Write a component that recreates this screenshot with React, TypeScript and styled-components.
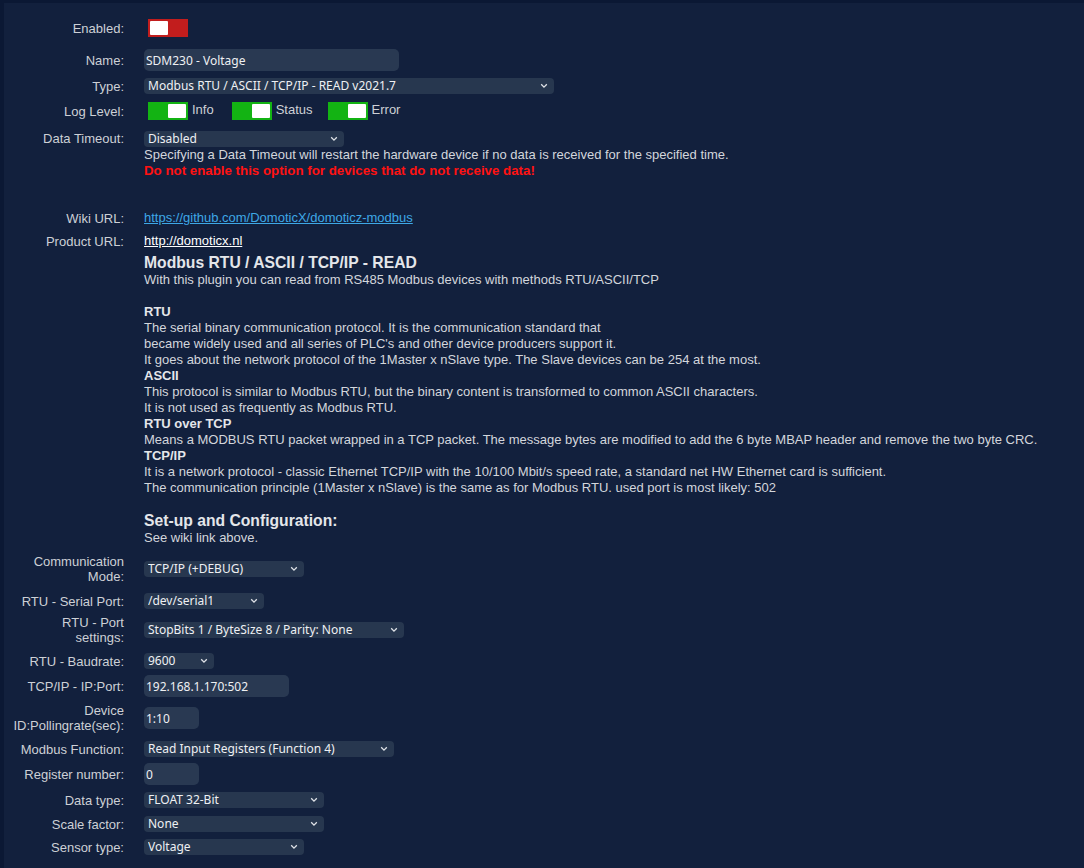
import styled, { createGlobalStyle } from "styled-components";

const GlobalStyle = createGlobalStyle`
  html, body {
    margin: 0;
    padding: 0;
    background: #0b1834;
  }
  body {
    font-family: "Liberation Sans", Arial, sans-serif;
  }
`

const Panel = styled.div`
  margin: 3px 0 0 4px;
  background: #12203d;
  min-height: 865px;
  padding: 16px 0 0 8px;
  box-sizing: border-box;
  color: #d3d6dc;
`

const Row = styled.div<{ $mt?: number; $top?: boolean }>`
  display: grid;
  grid-template-columns: 112px 1fr;
  column-gap: 20px;
  align-items: ${(p) => (p.$top ? "start" : "center")};
  margin-top: ${(p) => p.$mt ?? 0}px;
`

const Label = styled.div`
  text-align: right;
  font-size: 13px;
  line-height: 15px;
  color: #cdd0d6;
`

const Value = styled.div`
  font-size: 13px;
  line-height: 16px;
  min-width: 0;
`

const Toggle = styled.span<{ $on: boolean }>`
  display: inline-block;
  position: relative;
  width: 40px;
  height: 18px;
  margin-left: 4px;
  background: ${(p) => (p.$on ? "#13b313" : "#c21d1d")};
  flex: none;

  &::after {
    content: "";
    position: absolute;
    top: 2px;
    ${(p) => (p.$on ? "right: 2px;" : "left: 2px;")}
    width: 18px;
    height: 14px;
    background: #fff;
    border-radius: 1px;
  }
`

const LogGroup = styled.div`
  display: flex;
  align-items: center;
`

const LogItem = styled.span<{ $gap: number }>`
  display: inline-flex;
  align-items: center;
  margin-right: ${(p) => p.$gap}px;
  font-size: 13px;
  color: #cdd0d6;
`

const LogText = styled.span`
  margin-left: 4px;
  position: relative;
  top: -1px;
`

const SelectWrap = styled.div<{ $w: number }>`
  position: relative;
  width: ${(p) => p.$w}px;
  height: 16px;
`

const NativeSelect = styled.select`
  appearance: none;
  width: 100%;
  height: 16px;
  margin: 0;
  border: none;
  border-radius: 4px;
  background: #27374f;
  color: #eef0f3;
  font-family: "Noto Sans", Roboto, sans-serif;
  font-size: 12px;
  line-height: 16px;
  padding: 0 16px 0 4px;
  outline: none;
`

const Chevron = styled.svg`
  position: absolute;
  right: 6px;
  top: 5px;
  pointer-events: none;
`

const TextInput = styled.input<{ $w: number }>`
  width: ${(p) => p.$w}px;
  height: 22px;
  box-sizing: border-box;
  margin: 0;
  border: none;
  border-radius: 5px;
  background: #293952;
  color: #eef0f3;
  font-family: "Noto Sans", Roboto, sans-serif;
  font-size: 12px;
  padding: 0 2px;
  outline: none;
`

const Hint = styled.div`
  color: #d3d6dc;
`

const Warning = styled.div`
  color: #ff1212;
  font-weight: bold;
  font-size: 13.3px;
`

const Link = styled.a<{ $blue?: boolean }>`
  color: ${(p) => (p.$blue ? "#3ea8e6" : "#ffffff")};
  text-decoration: underline;
  font-size: 13px;
`

const Description = styled.div`
  font-size: 13px;
  line-height: 16px;
  color: #d3d6dc;
`

const Heading = styled.div`
  font-weight: bold;
  font-size: 15.7px;
  line-height: 18px;
  color: #e4e6ea;
`

const Sub = styled.div`
  font-weight: bold;
  color: #e4e6ea;
`

const Blank = styled.div`
  height: 16px;
`

function Select({ w, value }: { w: number; value: string }) {
  return (
    <SelectWrap $w={w}>
      <NativeSelect defaultValue={value}>
        <option>{value}</option>
      </NativeSelect>
      <Chevron width="8" height="6" viewBox="0 0 8 6">
        <path d="M1.2 1.3 L4 4.1 L6.8 1.3" fill="none" stroke="#dfe2e7" strokeWidth="1.3" />
      </Chevron>
    </SelectWrap>
  )
}

export default function App() {
  return (
    <>
      <GlobalStyle />
      <Panel>
        <Row>
          <Label>Enabled:</Label>
          <Value>
            <LogGroup>
              <Toggle $on={false} />
            </LogGroup>
          </Value>
        </Row>
        <Row $mt={12}>
          <Label>Name:</Label>
          <Value>
            <TextInput $w={255} defaultValue="SDM230 - Voltage" />
          </Value>
        </Row>
        <Row $mt={7}>
          <Label>Type:</Label>
          <Value>
            <Select w={410} value="Modbus RTU / ASCII / TCP/IP - READ v2021.7" />
          </Value>
        </Row>
        <Row $mt={8}>
          <Label>Log Level:</Label>
          <Value>
            <LogGroup>
              <LogItem $gap={14}>
                <Toggle $on />
                <LogText>Info</LogText>
              </LogItem>
              <LogItem $gap={11}>
                <Toggle $on />
                <LogText>Status</LogText>
              </LogItem>
              <LogItem $gap={0}>
                <Toggle $on />
                <LogText>Error</LogText>
              </LogItem>
            </LogGroup>
          </Value>
        </Row>
        <Row $mt={11} $top>
          <Label>Data Timeout:</Label>
          <Value>
            <Select w={200} value="Disabled" />
            <Hint>Specifying a Data Timeout will restart the hardware device if no data is received for the specified time.</Hint>
            <Warning>Do not enable this option for devices that do not receive data!</Warning>
          </Value>
        </Row>
        <Row $mt={31}>
          <Label>Wiki URL:</Label>
          <Value>
            <Link $blue href="#">https://github.com/DomoticX/domoticz-modbus</Link>
          </Value>
        </Row>
        <Row $mt={7}>
          <Label>Product URL:</Label>
          <Value>
            <Link href="#">http://domoticx.nl</Link>
          </Value>
        </Row>
        <Row $mt={5} $top>
          <Label />
          <Description>
            <Heading>Modbus RTU / ASCII / TCP/IP - READ</Heading>
            <div>With this plugin you can read from RS485 Modbus devices with methods RTU/ASCII/TCP</div>
            <Blank />
            <Sub>RTU</Sub>
            <div>The serial binary communication protocol. It is the communication standard that</div>
            <div>became widely used and all series of PLC's and other device producers support it.</div>
            <div>It goes about the network protocol of the 1Master x nSlave type. The Slave devices can be 254 at the most.</div>
            <Sub>ASCII</Sub>
            <div>This protocol is similar to Modbus RTU, but the binary content is transformed to common ASCII characters.</div>
            <div>It is not used as frequently as Modbus RTU.</div>
            <Sub>RTU over TCP</Sub>
            <div>Means a MODBUS RTU packet wrapped in a TCP packet. The message bytes are modified to add the 6 byte MBAP header and remove the two byte CRC.</div>
            <Sub>TCP/IP</Sub>
            <div>It is a network protocol - classic Ethernet TCP/IP with the 10/100 Mbit/s speed rate, a standard net HW Ethernet card is sufficient.</div>
            <div>The communication principle (1Master x nSlave) is the same as for Modbus RTU. used port is most likely: 502</div>
            <Blank />
            <Heading>Set-up and Configuration:</Heading>
            <div>See wiki link above.</div>
          </Description>
        </Row>
        <Row $mt={8}>
          <Label>Communication Mode:</Label>
          <Value>
            <Select w={160} value="TCP/IP (+DEBUG)" />
          </Value>
        </Row>
        <Row $mt={9}>
          <Label>RTU - Serial Port:</Label>
          <Value>
            <Select w={120} value="/dev/serial1" />
          </Value>
        </Row>
        <Row $mt={6}>
          <Label>RTU - Port settings:</Label>
          <Value>
            <Select w={260} value="StopBits 1 / ByteSize 8 / Parity: None" />
          </Value>
        </Row>
        <Row $mt={8}>
          <Label>RTU - Baudrate:</Label>
          <Value>
            <Select w={70} value="9600" />
          </Value>
        </Row>
        <Row $mt={6}>
          <Label>TCP/IP - IP:Port:</Label>
          <Value>
            <TextInput $w={145} defaultValue="192.168.1.170:502" />
          </Value>
        </Row>
        <Row $mt={6}>
          <Label>Device ID:Pollingrate(sec):</Label>
          <Value>
            <TextInput $w={55} defaultValue="1:10" />
          </Value>
        </Row>
        <Row $mt={8}>
          <Label>Modbus Function:</Label>
          <Value>
            <Select w={250} value="Read Input Registers (Function 4)" />
          </Value>
        </Row>
        <Row $mt={6}>
          <Label>Register number:</Label>
          <Value>
            <TextInput $w={55} defaultValue="0" />
          </Value>
        </Row>
        <Row $mt={7}>
          <Label>Data type:</Label>
          <Value>
            <Select w={180} value="FLOAT 32-Bit" />
          </Value>
        </Row>
        <Row $mt={8}>
          <Label>Scale factor:</Label>
          <Value>
            <Select w={180} value="None" />
          </Value>
        </Row>
        <Row $mt={7}>
          <Label>Sensor type:</Label>
          <Value>
            <Select w={160} value="Voltage" />
          </Value>
        </Row>
      </Panel>
    </>
  )
}
